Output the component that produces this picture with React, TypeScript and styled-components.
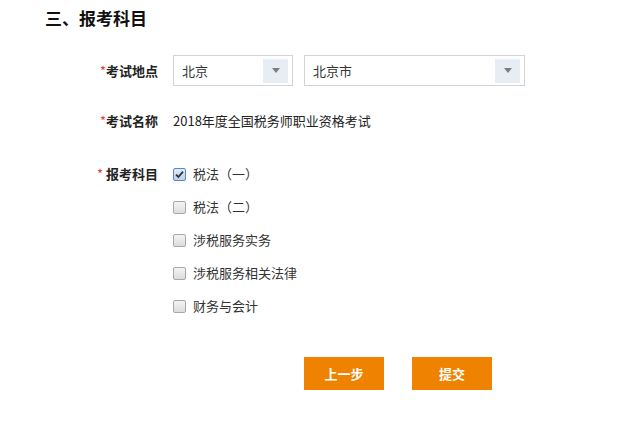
import React, { useState } from 'react'
import styled, { createGlobalStyle } from 'styled-components'

const GlobalStyle = createGlobalStyle`
    html, body {
        margin: 0;
        padding: 0;
        background: #fff;
        font-family: "Microsoft YaHei", "Noto Sans CJK SC", "Noto Sans", sans-serif;
    }
`

const subjects = ['税法（一）', '税法（二）', '涉税服务实务', '涉税服务相关法律', '财务与会计']

const Select: React.FunctionComponent<{ value: string; width: number }> = ({ value, width }) => (
    <SelectBox style={{ width }}>
        <SelectText>{value}</SelectText>
        <ArrowBox>
            <Triangle />
        </ArrowBox>
    </SelectBox>
)

export default function App() {
    const [checked, setChecked] = useState<Array<boolean>>([true, false, false, false, false])

    const toggle = (index: number) => {
        setChecked(prev => prev.map((item, i) => (i === index ? !item : item)))
    }

    return (
        <Page>
            <GlobalStyle />
            <Title>三、报考科目</Title>
            <Form>
                <Row>
                    <Label><Star>*</Star>考试地点</Label>
                    <Selects>
                        <Select value="北京" width={120} />
                        <Select value="北京市" width={221} />
                    </Selects>
                </Row>
                <TextRow>
                    <Label><Star>*</Star>考试名称</Label>
                    <Value>2018年度全国税务师职业资格考试</Value>
                </TextRow>
                <SubjectRow>
                    <Label><Star>*</Star>&nbsp;报考科目</Label>
                    <Options>
                        {subjects.map((subject, index) => (
                            <Option key={subject} onClick={() => toggle(index)}>
                                <Box checked={checked[index]}>
                                    {checked[index] && (
                                        <svg width="9" height="9" viewBox="0 0 9 9">
                                            <path d="M1 4.6 L3.4 7 L8 1.6" fill="none" stroke="#333" strokeWidth="1.8" />
                                        </svg>
                                    )}
                                </Box>
                                <span>{subject}</span>
                            </Option>
                        ))}
                    </Options>
                </SubjectRow>
            </Form>
            <Buttons>
                <Button>上一步</Button>
                <Button>提交</Button>
            </Buttons>
        </Page>
    )
}

const Page = styled.div`
    width: 635px;
    height: 423px;
    padding-left: 45px;
    box-sizing: border-box;
`

const Title = styled.h2`
    margin: 0;
    padding-top: 6px;
    height: 55px;
    box-sizing: border-box;
    font-size: 17px;
    line-height: 24px;
    font-weight: bold;
    color: #111;
`

const Form = styled.div`
    display: flex;
    flex-direction: column;
    padding-left: 50px;
`

const Row = styled.div`
    display: flex;
    align-items: center;
    height: 31px;
`

const TextRow = styled.div`
    display: flex;
    align-items: center;
    margin-top: 25px;
    line-height: 20px;
`

const SubjectRow = styled.div`
    display: flex;
    align-items: flex-start;
    margin-top: 33px;
    line-height: 20px;
`

const Label = styled.div`
    width: 63px;
    margin-right: 15px;
    text-align: right;
    font-size: 13px;
    font-weight: bold;
    color: #222;
    white-space: nowrap;
    line-height: 20px;
`

const Star = styled.span`
    color: #e4393c;
    font-weight: normal;
`

const Selects = styled.div`
    display: flex;
    gap: 11px;
`

const SelectBox = styled.div`
    height: 31px;
    box-sizing: border-box;
    border: 1px solid #d4d4d4;
    display: flex;
    align-items: center;
    justify-content: space-between;
    padding: 0 4px 0 8px;
    background: #fff;
`

const SelectText = styled.span`
    font-size: 13px;
    color: #333;
`

const ArrowBox = styled.div`
    width: 25px;
    height: 24px;
    background: #e6edf4;
    display: flex;
    align-items: center;
    justify-content: center;
`

const Triangle = styled.div`
    width: 0;
    height: 0;
    border-left: 4px solid transparent;
    border-right: 4px solid transparent;
    border-top: 5px solid #7d7d7d;
`

const Value = styled.div`
    font-size: 13px;
    color: #222;
`

const Options = styled.div`
    display: flex;
    flex-direction: column;
    gap: 13px;
`

const Option = styled.label`
    display: flex;
    align-items: center;
    gap: 7px;
    font-size: 13px;
    color: #333;
    cursor: pointer;
`

const Box = styled.span<{ checked: boolean }>`
    width: 13px;
    height: 13px;
    box-sizing: border-box;
    border: 1px solid ${({ checked }) => (checked ? '#5b86c9' : '#a8a8a8')};
    border-radius: 2px;
    background: ${({ checked }) =>
        checked ? 'linear-gradient(#dfe9f7, #bcd0ee)' : 'linear-gradient(#f4f4f4, #dcdcdc)'};
    display: flex;
    align-items: center;
    justify-content: center;
`

const Buttons = styled.div`
    display: flex;
    gap: 28px;
    margin-top: 41px;
    padding-left: 259px;
`

const Button = styled.button`
    width: 80px;
    height: 33px;
    border: none;
    background: #ef8200;
    color: #fff;
    font-family: inherit;
    font-size: 13px;
    font-weight: bold;
    cursor: pointer;
`
